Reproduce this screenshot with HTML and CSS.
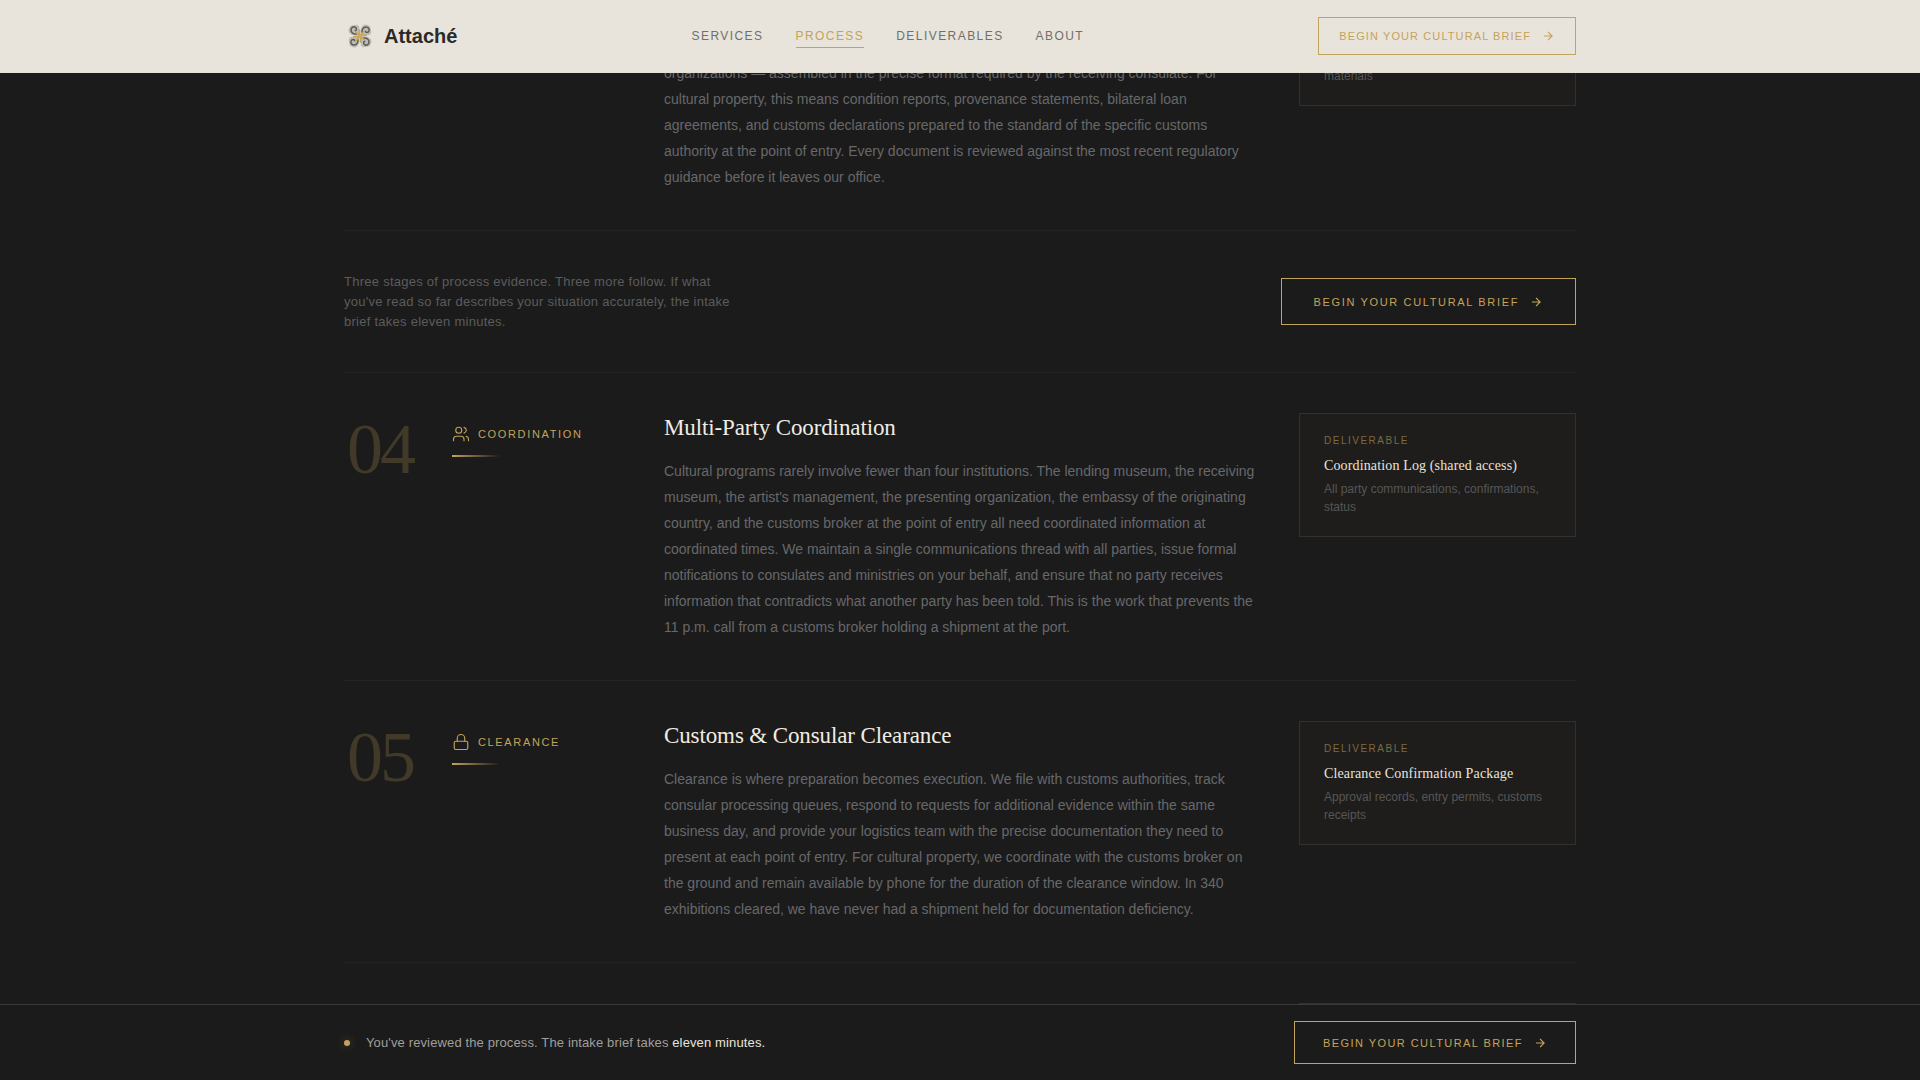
FILE: index.html
```html
<!DOCTYPE html>
<html lang="en">
<head>
  <meta charset="UTF-8">
  <meta name="viewport" content="width=device-width, initial-scale=1">
  <title>Attaché</title>
  <link rel="stylesheet" href="styles.css">
</head>
<body>

  <!-- shared icons -->
  <svg class="sprite" aria-hidden="true">
    <symbol id="arrow" viewBox="0 0 24 24">
      <path d="M5 12h14M12 5l7 7-7 7"/>
    </symbol>
    <symbol id="users" viewBox="0 0 24 24">
      <path d="M16 21v-2a4 4 0 0 0-4-4H6a4 4 0 0 0-4 4v2"/>
      <circle cx="9" cy="7" r="4"/>
      <path d="M22 21v-2a4 4 0 0 0-3-3.87M16 3.13a4 4 0 0 1 0 7.75"/>
    </symbol>
    <symbol id="lock" viewBox="0 0 24 24">
      <rect x="3" y="11" width="18" height="11" rx="2"/>
      <path d="M7 11V7a5 5 0 0 1 10 0v4"/>
    </symbol>
    <symbol id="petal" viewBox="0 0 16 16">
      <path class="petal-back" d="M15 15C11 16 6 16 3 13C0 11 0 7 2 5C2 3 5 1 7 2C10 0 14 1 15 4Z"/>
      <path class="petal-line" d="M12 13C8 14 4 12 4 8C4 5 7 3 9 4C12 5 12 9 9 9"/>
      <path class="petal-gold" d="M15 15V7M15 15L10 11"/>
    </symbol>
  </svg>

  <header class="header">
    <div class="container header-inner">
      <a class="brand" href="#">
        <svg class="brand-logo" viewBox="0 0 32 32" aria-hidden="true">
          <use href="#petal" x="4" y="4" width="12" height="12"/>
          <use href="#petal" x="4" y="4" width="12" height="12" transform="rotate(90 16 16)"/>
          <use href="#petal" x="4" y="4" width="12" height="12" transform="rotate(180 16 16)"/>
          <use href="#petal" x="4" y="4" width="12" height="12" transform="rotate(270 16 16)"/>
          <circle class="brand-core" cx="16" cy="16" r="2"/>
        </svg>
        <span>Attaché</span>
      </a>
      <nav class="nav">
        <a href="#">Services</a>
        <a class="active" href="#">Process</a>
        <a href="#">Deliverables</a>
        <a href="#">About</a>
      </nav>
      <a class="btn btn-small" href="#">Begin your cultural brief
        <svg class="btn-icon" aria-hidden="true"><use href="#arrow"/></svg>
      </a>
    </div>
  </header>

  <main class="container">
    <section class="stage stage-first">
      <div class="stage-body">
        <p>organizations — assembled in the precise format required by the receiving consulate. For cultural property, this means condition reports, provenance statements, bilateral loan agreements, and customs declarations prepared to the standard of the specific customs authority at the point of entry. Every document is reviewed against the most recent regulatory guidance before it leaves our office.</p>
      </div>
      <aside class="card">
        <p class="card-text">materials</p>
      </aside>
    </section>

    <section class="prompt">
      <p>Three stages of process evidence. Three more follow. If what you've read so far describes your situation accurately, the intake brief takes eleven minutes.</p>
      <a class="btn btn-large" href="#">Begin your cultural brief
        <svg class="btn-icon" aria-hidden="true"><use href="#arrow"/></svg>
      </a>
    </section>

    <section class="stage">
      <div class="stage-number">04</div>
      <div class="stage-label">
        <span class="stage-tag">
          <svg class="stage-icon" aria-hidden="true"><use href="#users"/></svg>
          Coordination
        </span>
      </div>
      <div class="stage-body">
        <h2>Multi-Party Coordination</h2>
        <p>Cultural programs rarely involve fewer than four institutions. The lending museum, the receiving museum, the artist's management, the presenting organization, the embassy of the originating country, and the customs broker at the point of entry all need coordinated information at coordinated times. We maintain a single communications thread with all parties, issue formal notifications to consulates and ministries on your behalf, and ensure that no party receives information that contradicts what another party has been told. This is the work that prevents the 11 p.m. call from a customs broker holding a shipment at the port.</p>
      </div>
      <aside class="card">
        <div class="card-label">Deliverable</div>
        <h3>Coordination Log (shared access)</h3>
        <p class="card-text">All party communications, confirmations, status</p>
      </aside>
    </section>

    <section class="stage">
      <div class="stage-number">05</div>
      <div class="stage-label">
        <span class="stage-tag">
          <svg class="stage-icon" aria-hidden="true"><use href="#lock"/></svg>
          Clearance
        </span>
      </div>
      <div class="stage-body">
        <h2>Customs &amp; Consular Clearance</h2>
        <p>Clearance is where preparation becomes execution. We file with customs authorities, track consular processing queues, respond to requests for additional evidence within the same business day, and provide your logistics team with the precise documentation they need to present at each point of entry. For cultural property, we coordinate with the customs broker on the ground and remain available by phone for the duration of the clearance window. In 340 exhibitions cleared, we have never had a shipment held for documentation deficiency.</p>
      </div>
      <aside class="card">
        <div class="card-label">Deliverable</div>
        <h3>Clearance Confirmation Package</h3>
        <p class="card-text">Approval records, entry permits, customs receipts</p>
      </aside>
    </section>

    <section class="stage stage-last">
      <aside class="card"></aside>
    </section>
  </main>

  <div class="bottom-bar">
    <div class="container bottom-inner">
      <span class="dot"></span>
      <p>You've reviewed the process. The intake brief takes <strong>eleven minutes.</strong></p>
      <a class="btn btn-medium" href="#">Begin your cultural brief
        <svg class="btn-icon" aria-hidden="true"><use href="#arrow"/></svg>
      </a>
    </div>
  </div>

</body>
</html>
```
FILE: styles.css
```css
* {
  box-sizing: border-box;
}

html, body {
  height: 100%;
}

body {
  margin: 0;
  overflow: hidden;
  background: #1b1b1b;
  color: #67686a;
  font-family: "Liberation Sans", Arial, sans-serif;
  font-size: 14px;
}

h2, h3, p {
  margin: 0;
}

a {
  color: inherit;
  text-decoration: none;
}

.sprite {
  display: none;
}

.container {
  max-width: 1312px;
  margin: 0 auto;
  padding: 0 40px;
}

/* header */

.header {
  position: fixed;
  top: 0;
  left: 0;
  right: 0;
  z-index: 10;
  border-bottom: 1px solid #e4e0d6;
  background: #e8e4dc;
}

.header-inner {
  display: flex;
  align-items: center;
  justify-content: space-between;
  height: 72px;
}

.brand {
  display: flex;
  align-items: center;
  gap: 8px;
  color: #2a2a28;
  font-size: 20px;
  font-weight: bold;
}

.brand-logo {
  width: 32px;
  height: 32px;
}

.petal-back {
  fill: #bfbcb4;
}

.petal-line {
  fill: none;
  stroke: #5d5b56;
  stroke-width: 2;
}

.petal-gold {
  fill: none;
  stroke: #c9a558;
  stroke-width: 2;
}

.brand-core {
  fill: #d0a850;
}

.nav {
  display: flex;
  gap: 32px;
  color: #6f706b;
  font-size: 12px;
  letter-spacing: 0.12em;
  text-transform: uppercase;
}

.nav a {
  padding: 4px 0;
  border-bottom: 1px solid transparent;
}

.nav .active {
  color: #c4a35a;
  border-color: #c4a35a;
}

/* buttons */

.btn {
  display: inline-flex;
  align-items: center;
  flex-shrink: 0;
  gap: 10px;
  border: 1px solid #c4a35a;
  color: #c4a35a;
  font-size: 11px;
  text-transform: uppercase;
}

.btn-icon {
  width: 14px;
  height: 14px;
  fill: none;
  stroke: currentColor;
  stroke-width: 2;
}

.btn-small {
  height: 38px;
  padding: 0 20px;
  letter-spacing: 0.1em;
}

.btn-medium {
  height: 43px;
  padding: 0 28px;
  letter-spacing: 0.13em;
}

.btn-large {
  height: 47px;
  padding: 0 32px;
  letter-spacing: 0.15em;
}

/* stages */

.stage {
  display: grid;
  grid-template-columns: 72px 176px 1fr 277px;
  column-gap: 36px;
  align-items: start;
  padding: 40px 0;
  border-bottom: 1px solid #232323;
}

.stage-first {
  padding-top: 46px;
}

.stage-first .stage-body {
  padding-top: 14px;
}

.stage-last {
  border-bottom: 0;
}

.stage-number {
  color: #423a28;
  font-family: "Liberation Serif", "Times New Roman", serif;
  font-size: 72px;
  line-height: 72px;
  letter-spacing: -0.04em;
  text-align: center;
}

.stage-label {
  padding-top: 12px;
}

.stage-tag {
  display: flex;
  align-items: center;
  gap: 8px;
  color: #c4a35a;
  font-size: 11px;
  line-height: 18px;
  letter-spacing: 0.15em;
  text-transform: uppercase;
}

.stage-label::after {
  content: "";
  display: block;
  width: 48px;
  height: 2px;
  margin-top: 12px;
  background: linear-gradient(90deg, #c4a35a, transparent);
}

.stage-icon {
  width: 18px;
  height: 18px;
  fill: none;
  stroke: #c4a35a;
  stroke-width: 1.5;
  stroke-linecap: round;
}

.stage-body {
  grid-column: 3;
}

.stage-body h2 {
  margin-bottom: 16px;
  color: #f0ece2;
  font-family: "Liberation Serif", "Times New Roman", serif;
  font-size: 23px;
  font-weight: normal;
  line-height: 29px;
  letter-spacing: -0.005em;
}

.stage-body p {
  line-height: 26px;
}

/* deliverable cards */

.card {
  grid-column: 4;
  padding: 20px 24px;
  border: 1px solid #30302c;
  background: #1e1d1b;
}

.card-label {
  margin-bottom: 8px;
  color: #7c6a40;
  font-size: 10px;
  line-height: 14px;
  letter-spacing: 0.15em;
  text-transform: uppercase;
}

.card h3 {
  margin-bottom: 4px;
  color: #e8e4dc;
  font-family: "Liberation Serif", "Times New Roman", serif;
  font-size: 14px;
  font-weight: normal;
  line-height: 20px;
  letter-spacing: 0.01em;
}

.card-text {
  color: #565656;
  font-size: 12px;
  line-height: 18px;
}

/* prompt between the stages */

.prompt {
  display: flex;
  align-items: center;
  justify-content: space-between;
  min-height: 142px;
  border-bottom: 1px solid #232323;
}

.prompt p {
  max-width: 400px;
  color: #5c5c5c;
  font-size: 13px;
  line-height: 20px;
  letter-spacing: 0.02em;
}

/* bottom bar */

.bottom-bar {
  position: fixed;
  bottom: 0;
  left: 0;
  right: 0;
  z-index: 10;
  border-top: 1px solid #3a3a38;
  background: #1b1b1b;
}

.bottom-inner {
  display: flex;
  align-items: center;
  gap: 16px;
  padding-top: 16px;
  padding-bottom: 16px;
}

.bottom-inner p {
  flex: 1;
  color: #a09f9b;
  font-size: 13px;
  letter-spacing: 0.01em;
}

.bottom-inner strong {
  color: #e8e4dc;
  font-weight: normal;
}

.dot {
  width: 6px;
  height: 6px;
  border-radius: 50%;
  background: #c4a35a;
  box-shadow: 0 0 8px rgba(196, 163, 90, 0.4);
}
```
